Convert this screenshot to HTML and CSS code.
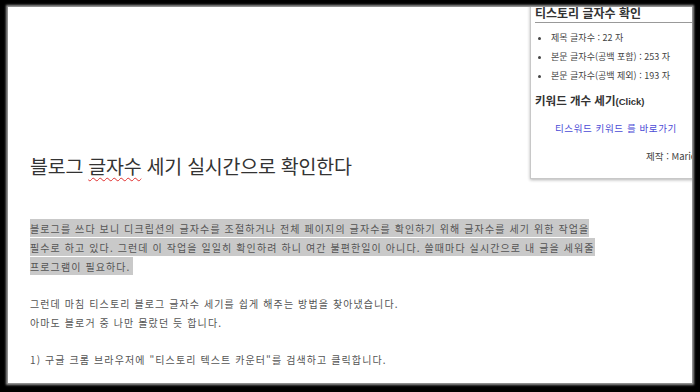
FILE: index.html
```html
<!DOCTYPE html>
<html lang="ko">
<head>
<meta charset="utf-8">
<link rel="stylesheet" href="styles.css">
</head>
<body>
<div class="frame">
  <div class="page">
    <div class="content">
      <h1 class="title">블로그 <span class="spell">글자수</span> 세기 실시간으로 확인한다</h1>
      <p class="para selected"><span class="sel">블로그를 쓰다 보니 디크립션의 글자수를 조절하거나 전체 페이지의 글자수를 확인하기 위해 글자수를 세기 위한 작업을<br>필수로 하고 있다. 그런데 이 작업을 일일히 확인하려 하니 여간 불편한일이 아니다. 쓸때마다 실시간으로 내 글을 세워줄<br>프로그램이 필요하다.</span></p>
      <p class="para">그런데 마침 티스토리 블로그 글자수 세기를 쉽게 해주는 방법을 찾아냈습니다.<br>아마도 블로거 중 나만 몰랐던 듯 합니다.</p>
      <p class="para step">1) 구글 크롬 브라우저에 "티스토리 텍스트 카운터"를 검색하고 클릭합니다.</p>
    </div>
    <div class="popup">
      <div class="popup-title">티스토리 글자수 확인</div>
      <ul class="counts">
        <li>제목 글자수 : 22 자</li>
        <li>본문 글자수(공백 포함) : 253 자</li>
        <li>본문 글자수(공백 제외) : 193 자</li>
      </ul>
      <div class="kw-title">키워드 개수 세기<span class="click">(Click)</span></div>
      <div class="kw-link">티스워드 키워드 를 바로가기</div>
      <div class="credit">제작 : Mario</div>
    </div>
  </div>
</div>
</body>
</html>
```
FILE: styles.css
```css
html, body {
  margin: 0;
  padding: 0;
  background: #000;
}
body {
  width: 700px;
  height: 392px;
  overflow: hidden;
  font-family: "Noto Sans CJK KR", "Noto Sans", sans-serif;
}
.frame {
  padding: 7px 8px 9px 8px;
  box-sizing: border-box;
  height: 392px;
}
.page {
  position: relative;
  background: #fff;
  height: 376px;
  overflow: hidden;
  box-shadow: 0 0 2px 2px #9a9a9a;
}
.content {
  padding: 146px 0 0 22px;
  color: #555;
}
.title {
  margin: 0;
  font-size: 19.5px;
  font-weight: 400;
  line-height: 26px;
  color: #333;
  letter-spacing: -0.25px;
}
.spell {
  text-decoration: underline wavy #e03030;
  text-decoration-thickness: 1px;
  text-underline-offset: 3px;
}
.para {
  margin: 0;
  font-size: 10px;
  line-height: 19px;
  letter-spacing: 1.1px;
  white-space: nowrap;
}
.selected {
  margin-top: 40px;
}
.sel {
  background: #c9c9c9;
  padding: 2px 2px 1px 0;
}
.para + .para {
  margin-top: 18px;
}
.step {
  margin-top: 16px;
}
.popup {
  position: absolute;
  left: 522px;
  top: -4px;
  width: 200px;
  height: 176px;
  background: #fff;
  border: 1px solid #c8c8c8;
  box-shadow: 0 1px 3px rgba(0,0,0,0.3);
  padding: 0 4px;
  box-sizing: border-box;
  color: #333;
}
.popup-title {
  font-size: 12px;
  font-weight: 700;
  line-height: 18px;
  border-bottom: 1px solid #999;
  width: 157px;
}
.counts {
  margin: 5px 0 0 0;
  padding-left: 16px;
  font-size: 9px;
  line-height: 19px;
  color: #444;
}
.kw-title {
  margin-top: 6px;
  font-size: 11.5px;
  font-weight: 700;
  line-height: 18px;
}
.click {
  font-family: "Liberation Sans", sans-serif;
  font-size: 9.5px;
}
.kw-link {
  margin-top: 9px;
  padding-left: 20px;
  font-size: 9.5px;
  color: #4b4bd6;
  letter-spacing: 0.6px;
  line-height: 16px;
}
.credit {
  margin-top: 13px;
  padding-left: 111px;
  font-size: 9.5px;
  line-height: 14px;
  color: #444;
}
```
